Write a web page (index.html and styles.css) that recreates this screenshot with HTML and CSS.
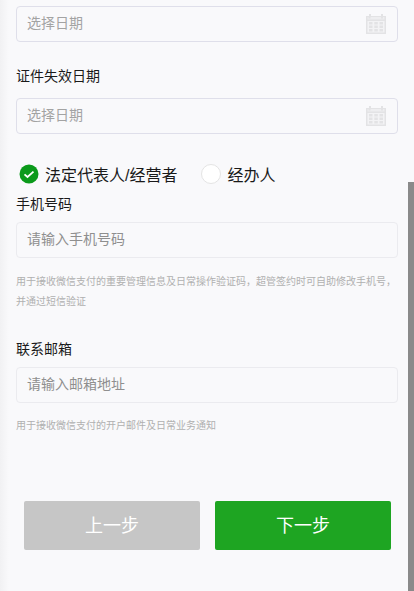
FILE: index.html
```html
<!DOCTYPE html>
<html lang="zh-CN">
<head>
    <meta charset="UTF-8">
    <meta name="viewport" content="width=device-width, initial-scale=1.0">
    <title>填写资料</title>
    <link rel="stylesheet" href="styles.css">
</head>
<body>
    <div class="page">
        <div class="form">
            <div class="input-box date-box">
                <span class="placeholder">选择日期</span>
                <svg class="calendar" viewBox="0 0 20 20" width="20" height="20">
                    <path d="M0 2h20v18H0z" fill="#e3e3e5"/>
                    <path d="M3 0h2v4H3zM15 0h2v4h-2z" fill="#e3e3e5"/>
                    <path d="M1.5 3h1v1.500h2V3h10.500v1.500h2V3h1.500v2.500h-17z" fill="#eeeef0"/>
                    <path d="M1.500 7h17v11.500h-17z" fill="#f3f3f5"/>
                    <path d="M3 8h3.500v2.500H3zM8.300 8h3.500v2.500H8.300zM13.500 8H17v2.500h-3.500zM3 11.500h3.500V14H3zM8.300 11.500h3.500V14H8.300zM13.500 11.500H17V14h-3.500zM3 15h3.500v2.500H3zM8.300 15h3.500v2.500H8.300zM13.500 15H17v2.500h-3.500z" fill="#e3e3e5"/>
                </svg>
            </div>

            <div class="label expire-label">证件失效日期</div>
            <div class="input-box date-box">
                <span class="placeholder">选择日期</span>
                <svg class="calendar" viewBox="0 0 20 20" width="20" height="20">
                    <path d="M0 2h20v18H0z" fill="#e3e3e5"/>
                    <path d="M3 0h2v4H3zM15 0h2v4h-2z" fill="#e3e3e5"/>
                    <path d="M1.5 3h1v1.500h2V3h10.500v1.500h2V3h1.500v2.500h-17z" fill="#eeeef0"/>
                    <path d="M1.500 7h17v11.500h-17z" fill="#f3f3f5"/>
                    <path d="M3 8h3.500v2.500H3zM8.300 8h3.500v2.500H8.300zM13.500 8H17v2.500h-3.500zM3 11.500h3.500V14H3zM8.300 11.500h3.500V14H8.300zM13.500 11.500H17V14h-3.500zM3 15h3.500v2.500H3zM8.300 15h3.500v2.500H8.300zM13.500 15H17v2.500h-3.500z" fill="#e3e3e5"/>
                </svg>
            </div>

            <div class="radio-row">
                <div class="radio-item">
                    <svg class="radio-icon" viewBox="0 0 20 20" width="20" height="20">
                        <circle cx="10" cy="10" r="9.500" fill="#0b9a1b"/>
                        <path d="M5.500 10.300l3 2.700 6-5.300" fill="none" stroke="#fff" stroke-width="1.800"/>
                    </svg>
                    <span>法定代表人/经营者</span>
                </div>
                <div class="radio-item">
                    <span class="radio-empty"></span>
                    <span>经办人</span>
                </div>
            </div>

            <div class="label phone-label">手机号码</div>
            <div class="input-box light">
                <span class="placeholder">请输入手机号码</span>
            </div>
            <p class="hint phone-hint">用于接收微信支付的重要管理信息及日常操作验证码，超管签约时可自助修改手机号，并通过短信验证</p>

            <div class="label mail-label">联系邮箱</div>
            <div class="input-box light">
                <span class="placeholder">请输入邮箱地址</span>
            </div>
            <p class="hint mail-hint">用于接收微信支付的开户邮件及日常业务通知</p>

            <div class="buttons">
                <button class="btn btn-prev">上一步</button>
                <button class="btn btn-next">下一步</button>
            </div>
        </div>
        <div class="scroll-thumb"></div>
    </div>
</body>
</html>
```

FILE: styles.css
```css
* {
    box-sizing: border-box;
}

html, body {
    margin: 0;
    height: 100%;
    overflow: hidden;
}

body {
    font-family: "Liberation Sans", "Noto Sans CJK SC", sans-serif;
    background-color: #f9f9fb;
    color: #000;
}

.page {
    position: relative;
    height: 591px;
    background: linear-gradient(to right, #f1f1f3, #f9f9fb 9px);
}

.form {
    padding: 6px 16px 0 16px;
    width: 414px;
}

.label {
    font-size: 14px;
    line-height: 20px;
    color: #1a1a1a;
}

.expire-label {
    margin-top: 24px;
    margin-bottom: 12px;
}

.phone-label {
    margin-top: 8px;
    margin-bottom: 8px;
}

.mail-label {
    margin-top: 27px;
    margin-bottom: 8px;
}

.input-box {
    height: 36px;
    padding: 0 11px 0 10px;
    border: 1px solid #dfdfea;
    border-radius: 4px;
    display: flex;
    align-items: center;
    justify-content: space-between;
}

.input-box.light {
    border-color: #ebebef;
}

.placeholder {
    font-size: 14px;
    color: #8f8f8f;
    padding-bottom: 5px;
}

.date-box .placeholder {
    color: #a3a3a3;
}

.radio-row {
    display: flex;
    gap: 24px;
    margin-top: 28px;
    padding-left: 3px;
    height: 24px;
    align-items: center;
    font-size: 16px;
    color: #1a1a1a;
}

.radio-item {
    display: flex;
    align-items: center;
    gap: 6px;
}

.radio-icon {
    display: block;
}

.radio-empty {
    width: 20px;
    height: 20px;
    border-radius: 50%;
    background-color: #fff;
    border: 1px solid #e4e4e4;
}

.hint {
    margin: 0;
    font-size: 10px;
    line-height: 20px;
    color: #b0b0b0;
}

.phone-hint {
    margin-top: 14px;
}

.mail-hint {
    margin-top: 13px;
}

.buttons {
    display: flex;
    gap: 15px;
    margin-top: 65px;
    padding-left: 8px;
}

.btn {
    width: 176px;
    height: 49px;
    border: none;
    border-radius: 2px;
    color: #fff;
    font-family: inherit;
    font-size: 18px;
    padding: 0 0 3px 0;
}

.btn-prev {
    background-color: #c6c6c6;
}

.btn-next {
    background-color: #1ea522;
}

.scroll-thumb {
    position: absolute;
    top: 182px;
    right: 0;
    width: 6px;
    height: 409px;
    background-color: #8a8a8a;
}
```
